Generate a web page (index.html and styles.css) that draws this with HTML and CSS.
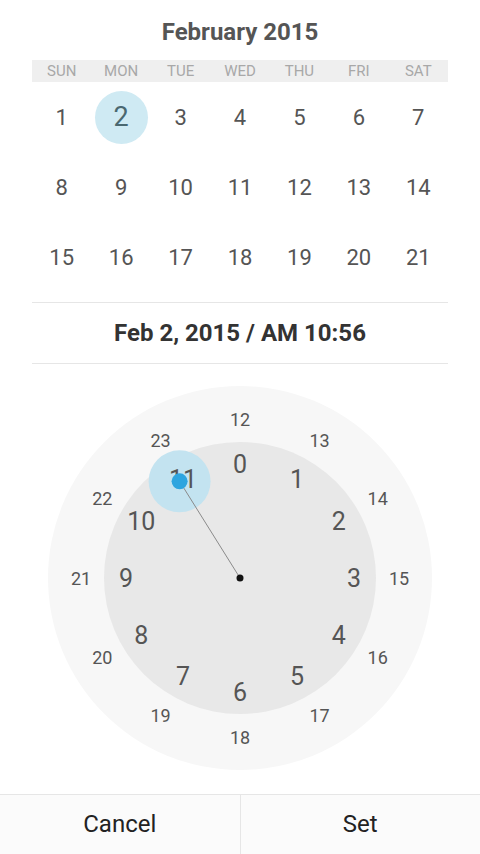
FILE: index.html
```html
<!DOCTYPE html>
<html lang="en">
<head>
    <meta charset="UTF-8">
    <meta name="viewport" content="width=device-width, initial-scale=1.0">
    <title>Date and time</title>
    <link rel="stylesheet" href="styles.css">
</head>
<body>
    <div class="picker">
        <h2 class="month">February 2015</h2>
        <div class="weekdays">
            <span>SUN</span><span>MON</span><span>TUE</span><span>WED</span><span>THU</span><span>FRI</span><span>SAT</span>
        </div>
        <div class="days">
            <span>1</span><span class="selected">2</span><span>3</span><span>4</span><span>5</span><span>6</span><span>7</span>
            <span>8</span><span>9</span><span>10</span><span>11</span><span>12</span><span>13</span><span>14</span>
            <span>15</span><span>16</span><span>17</span><span>18</span><span>19</span><span>20</span><span>21</span>
        </div>
        <div class="current">Feb 2, 2015 / AM 10:56</div>

        <div class="clock">
            <svg width="384" height="384" viewBox="0 0 384 384">
                <circle cx="192" cy="192" r="192" fill="#f7f7f7"/>
                <circle cx="192" cy="192" r="136" fill="#e8e8e8"/>
                <circle cx="131.6" cy="95.3" r="31" fill="#c3e3f0"/>
                <g class="inner">
                    <text x="192" y="78">0</text>
                    <text x="249" y="93.3">1</text>
                    <text x="290.7" y="135">2</text>
                    <text x="306" y="192">3</text>
                    <text x="290.7" y="249">4</text>
                    <text x="249" y="290.7">5</text>
                    <text x="192" y="306">6</text>
                    <text x="135" y="290.7">7</text>
                    <text x="93.3" y="249">8</text>
                    <text x="78" y="192">9</text>
                    <text x="93.3" y="135">10</text>
                    <text x="135" y="93.3">11</text>
                </g>
                <g class="outer">
                    <text x="192" y="33">12</text>
                    <text x="271.5" y="54.3">13</text>
                    <text x="329.7" y="112.5">14</text>
                    <text x="351" y="192">15</text>
                    <text x="329.7" y="271.5">16</text>
                    <text x="271.5" y="329.7">17</text>
                    <text x="192" y="351">18</text>
                    <text x="112.5" y="329.7">19</text>
                    <text x="54.3" y="271.5">20</text>
                    <text x="33" y="192">21</text>
                    <text x="54.3" y="112.5">22</text>
                    <text x="112.5" y="54.3">23</text>
                </g>
                <line x1="192" y1="192" x2="131.6" y2="95.3" stroke="#8a8a8a" stroke-width="1"/>
                <circle cx="131.6" cy="95.3" r="8" fill="#2ea5df"/>
                <circle cx="192" cy="192" r="3.5" fill="#111"/>
            </svg>
        </div>

        <div class="buttons">
            <button>Cancel</button>
            <button>Set</button>
        </div>
    </div>
</body>
</html>
```

FILE: styles.css
```css
body {
    margin: 0;
    font-family: Roboto, 'Noto Sans', sans-serif;
    background: #ffffff;
    color: #555555;
}
.picker {
    width: 480px;
    height: 854px;
    overflow: hidden;
}
.month {
    margin: 0;
    padding: 18px 0 16px;
    font-size: 24px;
    line-height: 28px;
    font-weight: bold;
    text-align: center;
    color: #555555;
}
.weekdays {
    margin: -2px 32px 0;
    height: 22px;
    background: #efefef;
    display: grid;
    grid-template-columns: repeat(7, 1fr);
}
.weekdays span {
    font-size: 15px;
    line-height: 22px;
    text-align: center;
    color: #a8a8a8;
}
.days {
    margin: 0 32px;
    display: grid;
    grid-template-columns: repeat(7, 1fr);
    grid-auto-rows: 70px;
}
.days span {
    display: flex;
    align-items: center;
    justify-content: center;
    font-size: 22px;
    color: #555555;
}
.days .selected {
    justify-self: center;
    align-self: center;
    width: 53px;
    height: 53px;
    border-radius: 50%;
    background: #cfeaf3;
    font-size: 27px;
    color: #4a6870;
}
.current {
    margin: 10px 32px 0;
    border-top: 1px solid #e6e6e6;
    border-bottom: 1px solid #e6e6e6;
    height: 60px;
    line-height: 60px;
    text-align: center;
    font-size: 24px;
    font-weight: bold;
    color: #333333;
}
.clock {
    margin-top: 22px;
    height: 384px;
    display: flex;
    justify-content: center;
}
.clock text {
    text-anchor: middle;
    dominant-baseline: central;
    fill: #555555;
    font-family: Roboto, 'Noto Sans', sans-serif;
}
.clock .inner text {
    font-size: 25px;
}
.clock .outer text {
    font-size: 18px;
}
.buttons {
    margin-top: 24px;
    border-top: 1px solid #e6e6e6;
    display: flex;
    background: #fbfbfb;
}
.buttons button {
    flex: 1;
    height: 59px;
    border: none;
    background: none;
    font-family: Roboto, 'Noto Sans', sans-serif;
    font-size: 24px;
    line-height: 59px;
    padding: 0;
    color: #222222;
}
.buttons button + button {
    border-left: 1px solid #e6e6e6;
}
```
